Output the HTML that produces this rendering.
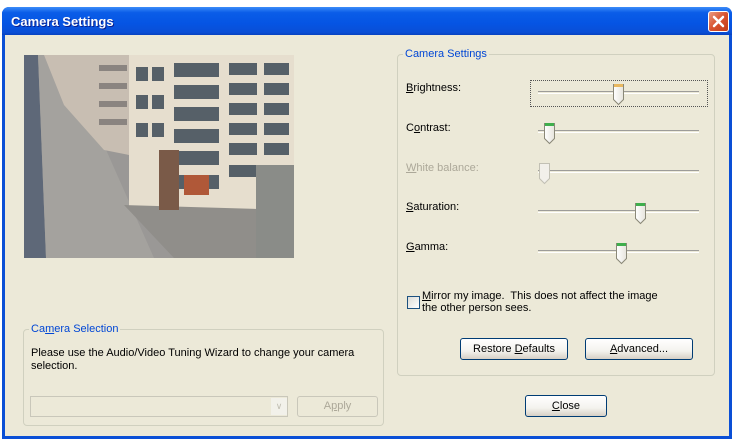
<!DOCTYPE html>
<html><head><meta charset="utf-8"><style>
*{margin:0;padding:0;box-sizing:border-box}
body{width:734px;height:439px;background:#fff;position:relative;overflow:hidden;font-family:Tahoma,"Liberation Sans",sans-serif;font-size:11px;color:#000}
.win{position:absolute;left:2px;top:7px;width:730px;height:432px;background:#0a4fd6;border-radius:7px 7px 0 0}
.title{position:absolute;left:0;top:0;width:730px;height:28px;border-radius:7px 7px 0 0;background:linear-gradient(#3d8cf8,#0a5de8 20%,#0554e3 60%,#0a4fd6 90%,#0842c0)}
.title span{position:absolute;left:9px;top:7px;color:#fff;font-weight:bold;font-size:13px;text-shadow:1px 1px #0a1e8c}
.xbtn{position:absolute;left:706px;top:4px;width:21px;height:21px;border:1px solid #fff;border-radius:3px;background:linear-gradient(135deg,#e99b82,#d8522e 50%,#c23c17)}
.body{position:absolute;left:3px;top:28px;width:724px;height:401px;background:#ece9d8}
.abs{position:absolute}
.grp{position:absolute;border:1px solid #d0d0bf;border-radius:4px}
.legend{position:absolute;background:#ece9d8;color:#0046d5;padding:0 2px;top:-7px;left:5px}
.lbl{position:absolute;left:406px}
.dis{color:#aca899}
.btn{position:absolute;border:1px solid #003c74;border-radius:3px;background:linear-gradient(#fff,#f4f3ee 60%,#d6d0c5);text-align:center;line-height:20px;font-size:11px}
.track{position:absolute;left:538px;width:161px;height:3px;border-top:1px solid #9d9c99;border-bottom:1px solid #fff;background:#ece9d8}
u{text-decoration:underline}
</style></head><body>
<div class="win">
 <div class="title"><span>Camera Settings</span>
  <div class="xbtn"><svg width="19" height="19"><path d="M5 5L14 14M14 5L5 14" stroke="#fff" stroke-width="2.5" stroke-linecap="round"/></svg></div>
 </div>
 <div class="body"></div>
</div>

<!-- video -->
<svg class="abs" style="left:24px;top:55px" width="270" height="203">
 <rect width="270" height="203" fill="#9a9896"/>
 <polygon points="0,0 14,0 22,203 0,203" fill="#5e6878"/>
 <polygon points="14,0 40,0 130,203 22,203" fill="#a4a29e"/>
 <polygon points="20,0 105,0 105,100 80,95 40,50" fill="#c8beb2"/>
 <g fill="#8a8480"><rect x="75" y="10" width="28" height="6"/><rect x="75" y="28" width="28" height="6"/><rect x="75" y="46" width="28" height="6"/><rect x="75" y="64" width="28" height="6"/></g>
 <rect x="105" y="0" width="165" height="155" fill="#e6dece"/>
 <g fill="#566068">
  <rect x="150" y="8" width="45" height="14"/><rect x="150" y="30" width="45" height="14"/><rect x="150" y="52" width="45" height="14"/><rect x="150" y="74" width="45" height="14"/><rect x="150" y="96" width="45" height="14"/><rect x="150" y="120" width="45" height="14"/>
  <rect x="205" y="8" width="28" height="12"/><rect x="205" y="28" width="28" height="12"/><rect x="205" y="48" width="28" height="12"/><rect x="205" y="68" width="28" height="12"/><rect x="205" y="88" width="28" height="12"/><rect x="205" y="110" width="28" height="12"/>
  <rect x="240" y="8" width="25" height="12"/><rect x="240" y="28" width="25" height="12"/><rect x="240" y="48" width="25" height="12"/><rect x="240" y="68" width="25" height="12"/><rect x="240" y="88" width="25" height="12"/>
  <rect x="112" y="12" width="12" height="14"/><rect x="128" y="12" width="12" height="14"/><rect x="112" y="40" width="12" height="14"/><rect x="128" y="40" width="12" height="14"/><rect x="112" y="68" width="12" height="14"/><rect x="128" y="68" width="12" height="14"/>
 </g>
 <polygon points="100,150 270,155 270,203 150,203" fill="#908e8a"/>
 <rect x="232" y="110" width="38" height="93" fill="#8a8c88"/>
 <rect x="135" y="95" width="20" height="60" fill="#7a5a48"/>
 <rect x="160" y="120" width="25" height="20" fill="#b05838"/>
</svg>

<!-- camera settings group -->
<div class="grp" style="left:397px;top:54px;width:318px;height:322px"><div class="legend">Camera Settings</div></div>
<div class="lbl" style="top:82px"><u>B</u>rightness:</div>
<div class="lbl" style="top:122px">C<u>o</u>ntrast:</div>
<div class="lbl dis" style="top:162px"><u>W</u>hite balance:</div>
<div class="lbl" style="top:201px"><u>S</u>aturation:</div>
<div class="lbl" style="top:241px"><u>G</u>amma:</div>
<div class="abs" style="left:530px;top:80px;width:178px;height:27px;border:1px dotted #555"></div>
<div class="track" style="top:91px"></div>
<div class="track" style="top:130px"></div>
<div class="track" style="top:170px"></div>
<div class="track" style="top:210px"></div>
<div class="track" style="top:250px"></div>
<svg class="abs" style="left:0;top:0" width="734" height="439">
 <defs>
  <linearGradient id="tg" x1="0" x2="1"><stop offset="0" stop-color="#fff"/><stop offset="1" stop-color="#e6e4dc"/></linearGradient>
 </defs>
 <path d="M613.5 84.5h10v15l-5 5-5-5z" fill="url(#tg)" stroke="#8a8878"/><rect x="614" y="84" width="9" height="3" fill="#e8b860"/>
 <path d="M544.5 123.5h10v15l-5 5-5-5z" fill="url(#tg)" stroke="#8a8878"/><rect x="545" y="123" width="9" height="3" fill="#3fae4c"/>
 <path d="M539.5 163.5h10v15l-5 5-5-5z" fill="#f2f0ea" stroke="#c2c0b4"/>
 <path d="M635.5 203.5h10v15l-5 5-5-5z" fill="url(#tg)" stroke="#8a8878"/><rect x="636" y="203" width="9" height="3" fill="#3fae4c"/>
 <path d="M616.5 243.5h10v15l-5 5-5-5z" fill="url(#tg)" stroke="#8a8878"/><rect x="617" y="243" width="9" height="3" fill="#3fae4c"/>
</svg>
<div class="abs" style="left:407px;top:296px;width:13px;height:13px;border:1px solid #1c5180;background:linear-gradient(135deg,#dcdcd6,#fff)"></div>
<div class="abs" style="left:422px;top:290px;line-height:12px"><u>M</u>irror my image.&nbsp; This does not affect the image<br>the other person sees.</div>
<div class="btn" style="left:460px;top:338px;width:108px;height:22px">Restore <u>D</u>efaults</div>
<div class="btn" style="left:585px;top:338px;width:108px;height:22px"><u>A</u>dvanced...</div>
<div class="btn" style="left:525px;top:395px;width:82px;height:22px"><u>C</u>lose</div>

<!-- camera selection -->
<div class="grp" style="left:23px;top:329px;width:361px;height:97px"><div class="legend">Ca<u>m</u>era Selection</div></div>
<div class="abs" style="left:31px;top:347px;line-height:13px">Please use the Audio/Video Tuning Wizard to change your camera<br>selection.</div>
<div class="abs" style="left:30px;top:396px;width:258px;height:21px;border:1px solid #c9c7ba;background:#ece9d8"></div>
<div class="abs" style="left:271px;top:398px;width:16px;height:17px;background:#f2f1ea;color:#c0beb2;text-align:center;font-size:9px;line-height:17px">&#8744;</div>
<div class="abs" style="left:297px;top:396px;width:81px;height:21px;border:1px solid #c9c7ba;border-radius:3px;color:#aca899;text-align:center;line-height:19px">A<u>p</u>ply</div>
</body></html>
